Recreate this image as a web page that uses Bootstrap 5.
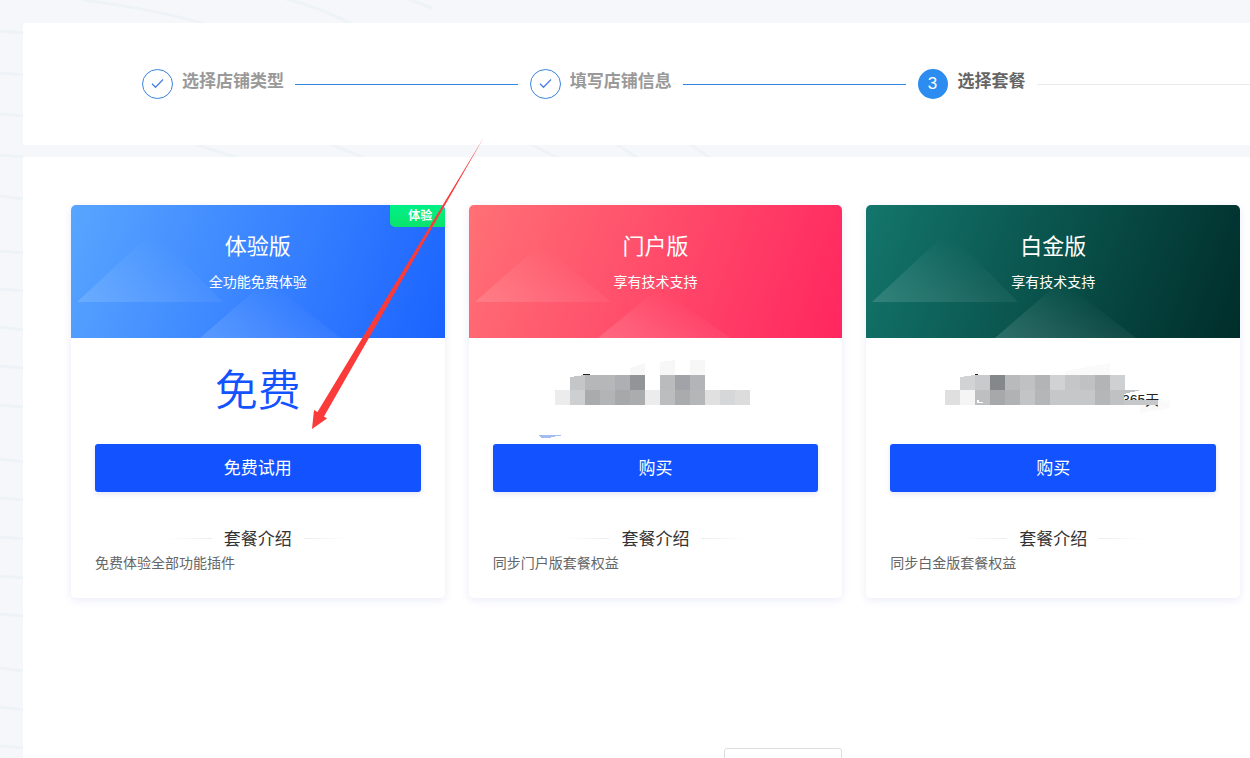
<!DOCTYPE html>
<html lang="zh-CN">
<head>
<meta charset="utf-8">
<meta name="viewport" content="width=device-width, initial-scale=1">
<title>选择套餐</title>
<link href="https://cdn.jsdelivr.net/npm/bootstrap@5.3.0/dist/css/bootstrap.min.css" rel="stylesheet">
<style>
  body { font-family: "Noto Sans CJK SC", sans-serif; font-size: 14px; color: #333; background: #f5f7fb; }
  .page { padding: 23px 0 0 23px; gap: 12px; }
  .backdrop { z-index: 0; top: 0; left: 0; }
  .panel { position: relative; background: #fff; }
  .steps { padding: 46px 0 46px 119px; }
  .step { flex: 0 0 35%; padding-right: 12px; }
  .step:last-child { flex: 1 1 0; padding-right: 0; }
  .step-dot { width: 31px; height: 30px; flex: none; margin-right: 9px; font-family: "Liberation Sans", sans-serif; font-size: 17px; line-height: 30px; }
  .step.current .step-dot { background: #2d8cf0; color: #fff; width: 30px; margin-right: 10px; }
  .step-name { font-size: 17px; line-height: 22px; font-weight: 700; color: #999; margin: 0 11px 0 0; white-space: nowrap; }
  .step.current .step-name { color: #666; }
  .step-line { height: 1px; margin-top: 15px; background: #2f86dc; }
  .step.current .step-line { background: #e8eaec; }
  .plans { padding: 48px 10px 0 48px; }
  .plan { background: #fff; border-radius: 5px; box-shadow: 0 2px 8px rgba(80,90,200,.12); overflow: hidden; }
  .plan-head { height: 133px; color: #fff; padding-top: 24px; }
  .plan-head svg { left: 0; top: 0; }
  .head-blue { background: linear-gradient(110deg, #58a5ff, #1b63ff); }
  .head-red { background: linear-gradient(110deg, #ff7075, #ff265f); }
  .head-green { background: linear-gradient(110deg, #13766c, #002d2a); }
  .plan-title { font-size: 22px; line-height: 30px; font-weight: 400; margin: 0 0 11px; }
  .plan-sub { font-size: 14px; line-height: 22px; margin: 0; }
  .trial-tag { top: 0; right: 0; width: 55px; height: 22px; padding-left: 6px; font-size: 12px; line-height: 20px; font-weight: 700; border-radius: 0 5px 0 5px; background: linear-gradient(#00f088, #0be36b); }
  .plan-body { padding: 0 24px 24px; }
  .price { height: 106px; }
  .price-free { font-size: 43px; line-height: 98px; font-weight: 350; color: #1252ff; }
  .btn-plan { height: 48px; border-radius: 3px; background: #1252ff; color: #fff; font-size: 17px; line-height: 24px; padding: 10px 0 12px; border: 0; box-shadow: 0 2px 5px rgba(80,90,200,.15); }
  .btn-plan:hover { background: #0d45dc; color: #fff; }
  .intro { font-size: 17px; line-height: 24px; font-weight: 400; margin: 34px 0 0; gap: 12px; }
  .intro::before, .intro::after { content: ""; width: 45px; height: 1px; background: linear-gradient(90deg, #fff, #ececec); }
  .intro::after { background: linear-gradient(270deg, #fff, #ececec); }
  .plan-desc { font-size: 14px; line-height: 22px; color: #666; margin: 1px 0; }
  .btn-back { width: 118px; height: 40px; margin: 150px 0 0 57.1%; background: #fff; border: 1px solid #dcdee2; border-radius: 3px; }
  .pointer { left: 300px; top: 130px; z-index: 5; pointer-events: none; }
</style>
</head>
<body class="vh-100 overflow-hidden position-relative">
<svg class="backdrop position-absolute" width="1250" height="758" viewBox="0 0 1250 758" aria-hidden="true" fill="none" stroke="#eef3f8" stroke-width="3">
  <path d="M82 0Q150 8 205 24M278 -3Q315 5 352 24M405 -2L432 8M195 144L238 158M331 144L364 158M530 144L558 158M616 144L638 158M690 144L710 158"/>
  <path d="M0 31L24 33M0 73L24 75M0 114L24 116M0 155L24 157M0 196L24 199M0 251L24 253M0 289L24 291M0 327L24 330M0 366L24 368M0 405L24 407M0 459L24 462M0 498L24 500M0 537L24 539M0 576L24 578M0 614L24 616M0 668L24 671M0 707L24 710M0 746L24 748"/>
</svg>

<main class="page d-flex flex-column min-vh-100">
  <section class="panel">
    <ol class="steps d-flex list-unstyled m-0">
      <li class="step d-flex align-items-start">
        <svg class="step-dot" viewBox="0 0 31 30" fill="none" role="img" aria-label="已完成"><ellipse cx="15.500" cy="15" rx="15" ry="14.500" stroke="#3c82dc"/><path d="M10 14.800L13.500 18.300L21 10.500" stroke="#4a7fe8" stroke-width="1.300"/></svg>
        <h2 class="step-name">选择店铺类型</h2><span class="step-line flex-grow-1"></span>
      </li>
      <li class="step d-flex align-items-start">
        <svg class="step-dot" viewBox="0 0 31 30" fill="none" role="img" aria-label="已完成"><ellipse cx="15.500" cy="15" rx="15" ry="14.500" stroke="#3c82dc"/><path d="M10 14.800L13.500 18.300L21 10.500" stroke="#4a7fe8" stroke-width="1.300"/></svg>
        <h2 class="step-name">填写店铺信息</h2><span class="step-line flex-grow-1"></span>
      </li>
      <li class="step current d-flex align-items-start" aria-current="step">
        <span class="step-dot rounded-circle text-center">3</span>
        <h2 class="step-name">选择套餐</h2><span class="step-line flex-grow-1"></span>
      </li>
    </ol>
  </section>

  <section class="panel flex-grow-1">
    <div class="plans">
      <div class="row gx-4">
        <div class="col-4">
          <article class="plan">
            <header class="plan-head head-blue position-relative text-center">
              <svg class="position-absolute" width="300" height="133" aria-hidden="true"><defs><linearGradient id="shine" x1="0" y1="1" x2=".75" y2=".25"><stop offset="0" stop-color="#fff" stop-opacity=".14"/><stop offset=".4" stop-color="#fff" stop-opacity=".09"/><stop offset="1" stop-color="#fff" stop-opacity="0"/></linearGradient></defs><path d="M6 97L76 32Q82 28 88 32L152 97Z" fill="url(#shine)"/><path d="M129 133L188 82Q196 76 204 82L270 133Z" fill="url(#shine)"/></svg>
              <span class="trial-tag position-absolute">体验</span>
              <h3 class="plan-title position-relative">体验版</h3>
              <p class="plan-sub position-relative">全功能免费体验</p>
            </header>
            <div class="plan-body">
              <div class="price price-free text-center">免费</div>
              <button type="button" class="btn btn-plan w-100">免费试用</button>
              <h4 class="intro d-flex justify-content-center align-items-center">套餐介绍</h4>
              <p class="plan-desc">免费体验全部功能插件</p>
            </div>
          </article>
        </div>
        <div class="col-4">
          <article class="plan">
            <header class="plan-head head-red position-relative text-center">
              <svg class="position-absolute" width="300" height="133" aria-hidden="true"><path d="M6 97L66 44Q72 39 78 44L142 97Z" fill="url(#shine)"/><path d="M129 133L181 90Q190 84 199 90L262 133Z" fill="url(#shine)"/></svg>
              <h3 class="plan-title position-relative">门户版</h3>
              <p class="plan-sub position-relative">享有技术支持</p>
            </header>
            <div class="plan-body">
              <div class="price d-flex justify-content-center align-items-end">
                <svg width="240" height="94" viewBox="535 350 240 94" shape-rendering="crispEdges" aria-hidden="true">
                  <path d="M581 376L584 374H590V377H581Z" fill="#222"/>
                  <path d="M630 368L645 363V375H630ZM660 362L675 360V375H660ZM690 360H705V375H690Z" fill="#f7f7f7"/>
                  <path d="M570 377L585 375V390H570Z" fill="#c5c6c7"/>
                  <path d="M585 375h30v15h-30z" fill="#b5b7b9"/><path d="M615 375h15v15h-15z" fill="#adafb2"/><path d="M630 375h15v15h-15z" fill="#929497"/>
                  <path d="M660 375h15v15h-15z" fill="#b9bbbd"/><path d="M675 375h15v15h-15z" fill="#a1a3a8"/><path d="M690 375h15v15h-15z" fill="#b2b4b7"/>
                  <path d="M555 390h15v15h-15z" fill="#ececec"/><path d="M570 390h15v15h-15z" fill="#cecfd0"/><path d="M585 390h15v15h-15z" fill="#aaabad"/><path d="M600 390h15v15h-15z" fill="#b3b4b6"/><path d="M615 390h15v15h-15z" fill="#a7a8aa"/><path d="M630 390h15v15h-15z" fill="#abacad"/><path d="M645 390h15v15h-15z" fill="#ececec"/>
                  <path d="M660 390h15v15h-15z" fill="#bcbdbe"/><path d="M675 390h15v15h-15z" fill="#aaabad"/><path d="M690 390h15v15h-15z" fill="#b5b6b8"/><path d="M705 390h15v15h-15z" fill="#e0e0e1"/><path d="M720 390h15v15h-15z" fill="#d6d7d8"/><path d="M735 390h15v15h-15z" fill="#dcdcdd"/>
                  <path d="M538 435H564L552 437L550 438H541Z" fill="#a5bcf0"/>
                </svg>
              </div>
              <button type="button" class="btn btn-plan w-100">购买</button>
              <h4 class="intro d-flex justify-content-center align-items-center">套餐介绍</h4>
              <p class="plan-desc">同步门户版套餐权益</p>
            </div>
          </article>
        </div>
        <div class="col-4">
          <article class="plan">
            <header class="plan-head head-green position-relative text-center">
              <svg class="position-absolute" width="300" height="133" aria-hidden="true"><path d="M6 97L76 32Q82 28 88 32L152 97Z" fill="url(#shine)"/><path d="M129 133L188 82Q196 76 204 82L270 133Z" fill="url(#shine)"/></svg>
              <h3 class="plan-title position-relative">白金版</h3>
              <p class="plan-sub position-relative">享有技术支持</p>
            </header>
            <div class="plan-body">
              <div class="price d-flex justify-content-center align-items-end">
                <svg width="240" height="94" viewBox="933 350 240 94" shape-rendering="crispEdges" aria-hidden="true">
                  <path d="M1065 371L1110 363V375H1065ZM1140 405L1170 400V408L1140 413Z" fill="#fafafa"/>
                  <path d="M975 374h3v2h-3z" fill="#222"/>
                  <text x="1122" y="405" font-family="Liberation Sans, Noto Sans CJK SC, sans-serif" font-size="14" fill="#222">365天</text>
                  <path d="M1120 400h38v5h-38z" fill="#c6c7c8"/><path d="M1158 400h6v10h-6z" fill="#fafafa"/>
                  <path d="M960 377L975 375V390H960Z" fill="#d2d3d4"/><path d="M975 375h15v15h-15z" fill="#c9cacc"/><path d="M990 375h15v15h-15z" fill="#85888b"/>
                  <path d="M1005 375h15v15h-15z" fill="#b9babc"/><path d="M1020 375h15v15h-15z" fill="#c0c1c3"/><path d="M1035 375h15v15h-15z" fill="#b2b4b6"/><path d="M1050 375h15v15h-15z" fill="#d1d2d4"/><path d="M1065 375h15v15h-15z" fill="#c5c6c8"/><path d="M1080 375h15v15h-15z" fill="#bfc1c3"/><path d="M1095 375h15v15h-15z" fill="#b3b4b6"/><path d="M1110 375h15v15h-15z" fill="#ced0d1"/>
                  <path d="M945 390h15v15h-15z" fill="#dfdfdf"/><path d="M960 390h15v15h-15z" fill="#f5f5f5"/><path d="M975 390h15v15h-15z" fill="#bebfc0"/><path d="M990 390h15v15h-15z" fill="#a7a8aa"/><path d="M1005 390h15v15h-15z" fill="#b1b2b4"/><path d="M1020 390h15v15h-15z" fill="#c3c4c5"/><path d="M1035 390h15v15h-15z" fill="#b5b6b8"/><path d="M1050 390h45v15h-45z" fill="#c6c7c8"/><path d="M1095 390h15v15h-15z" fill="#b5b6b8"/><path d="M1110 390H1141L1124 394V405H1110Z" fill="#c0c1c2"/>
                  <path d="M977 400h2v2h4v1h-6z" fill="#fff"/>
                </svg>
              </div>
              <button type="button" class="btn btn-plan w-100">购买</button>
              <h4 class="intro d-flex justify-content-center align-items-center">套餐介绍</h4>
              <p class="plan-desc">同步白金版套餐权益</p>
            </div>
          </article>
        </div>
      </div>
    </div>
    <button type="button" class="btn btn-back d-block" aria-label="返回"></button>
  </section>
</main>

<svg class="pointer position-absolute" width="190" height="305" viewBox="300 130 190 305" aria-hidden="true"><path d="M484 137L317.500 412L314 410L312 429L327 418.500L324 416.500Z" fill="#fb3a3a"/></svg>
<script src="https://cdn.jsdelivr.net/npm/bootstrap@5.3.0/dist/js/bootstrap.bundle.min.js"></script>
</body>
</html>
